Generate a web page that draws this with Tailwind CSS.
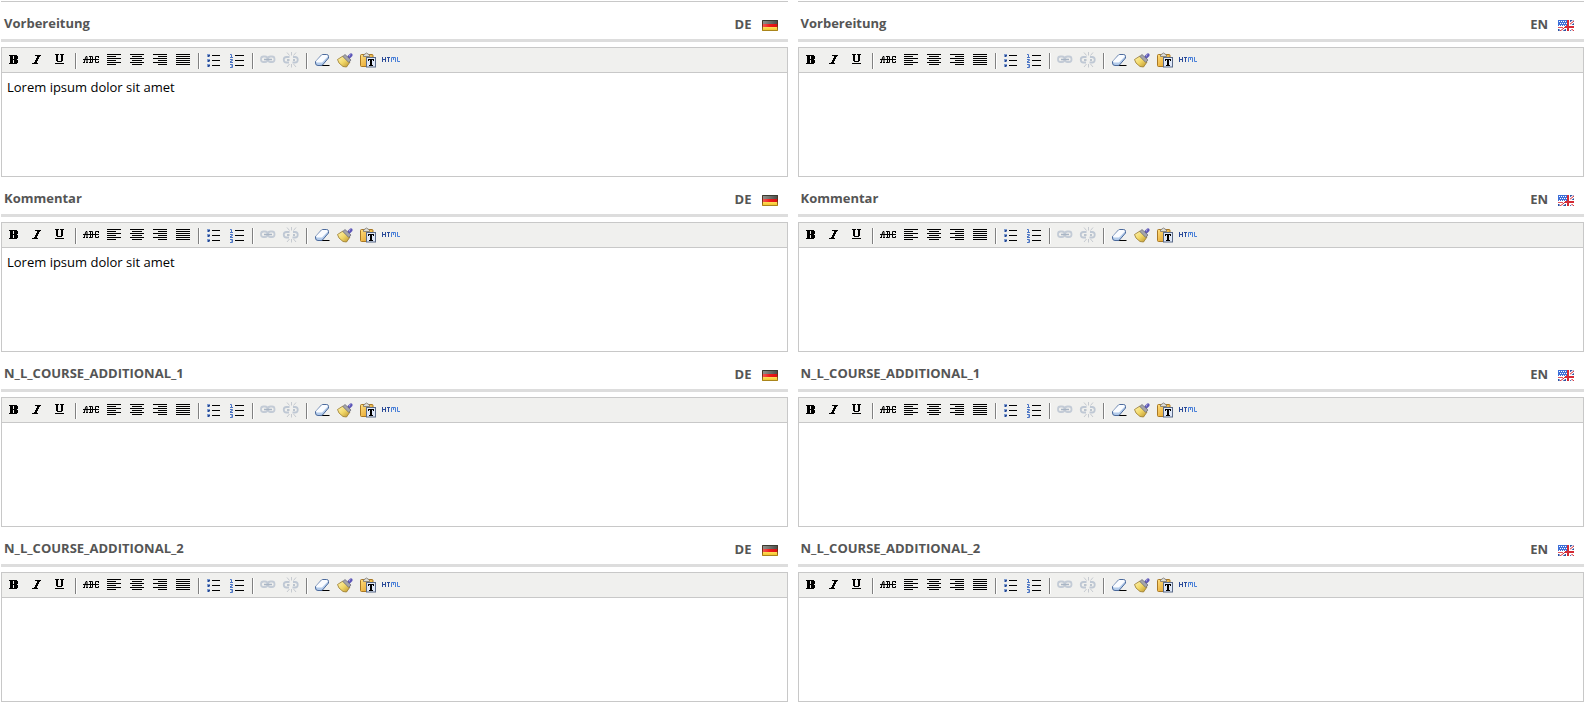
<!DOCTYPE html>
<html lang="de">
<head>
<meta charset="utf-8">
<title>Kurs bearbeiten</title>
<script src="https://cdn.jsdelivr.net/npm/@tailwindcss/browser@4"></script>
</head>
<body class="bg-white font-['Open_Sans',sans-serif] text-[13px]">
<svg class="absolute h-0 w-0" aria-hidden="true">
  <defs>
    <linearGradient id="red" x1="0" y1="0" x2="1" y2="0"><stop offset="0" stop-color="#f0605a"/><stop offset=".5" stop-color="#f01818"/><stop offset="1" stop-color="#d81010"/></linearGradient>
    <linearGradient id="dark" x1="0" y1="0" x2="1" y2="0"><stop offset="0" stop-color="#94948e"/><stop offset="1" stop-color="#4a4a46"/></linearGradient>
    <linearGradient id="gold" x1="0" y1="0" x2="0" y2="1"><stop offset="0" stop-color="#ffdf5a"/><stop offset="1" stop-color="#f0bc20"/></linearGradient>
    <linearGradient id="frame" x1="0" y1="0" x2="0" y2="1"><stop offset="0" stop-color="#3a3a30"/><stop offset=".5" stop-color="#7a2a14"/><stop offset="1" stop-color="#a8841c"/></linearGradient>
    <linearGradient id="bristle" x1="0" y1="0" x2="1" y2="1"><stop offset="0" stop-color="#fff6b8"/><stop offset=".5" stop-color="#f2d868"/><stop offset="1" stop-color="#b8902c"/></linearGradient>
    <linearGradient id="board" x1="0" y1="0" x2="1" y2="1"><stop offset="0" stop-color="#ffdf80"/><stop offset="1" stop-color="#e0981c"/></linearGradient>
  </defs>
  <symbol id="i-bold" viewBox="0 1 20 20"><path fill="#000" d="M5 6h8v1h1v3h-1v1h1v3h-1v1H5v-1h1V7H5zM9 7v3h1V7zM9 11v3h1v-3z"/></symbol>
  <symbol id="i-italic" viewBox="0 1 20 20"><path fill="#000" d="M8 6h6v1h-1v1h-1v2h-1v2h-1v2h1v1H5v-1h2v-1h1v-2h1V9h1V7H8z"/></symbol>
  <symbol id="i-underline" viewBox="0 1 20 20"><path fill="#000" d="M5 5h4v1H8v6h3V6h-1V5h4v1h-1v6h-1v1H7v-1H6V6H5zM5 14h9v1H5z"/></symbol>
  <symbol id="i-strike" viewBox="0 1 20 20"><path fill="none" stroke="#000" d="M2 10.500h16M3.500 14v-2l1.500-4.500h1V14M2 13.500h2M5 13.500h2M9.500 7v7M8 7.500h3.500v6H8M17.500 7v2M17 7.500h-2.500v6h3V12"/></symbol>
  <symbol id="i-left" viewBox="0 1 20 20"><path fill="#000" d="M3 5h14v1H3zM3 7h9v1H3zM3 9h14v1H3zM3 11h9v1H3zM3 13h14v1H3zM3 15h9v1H3z"/></symbol>
  <symbol id="i-center" viewBox="0 1 20 20"><path fill="#000" d="M3 5h14v1H3zM5 7h10v1H5zM3 9h14v1H3zM5 11h10v1H5zM3 13h14v1H3zM5 15h10v1H5z"/></symbol>
  <symbol id="i-right" viewBox="0 1 20 20"><path fill="#000" d="M3 5h14v1H3zM8 7h9v1H8zM3 9h14v1H3zM8 11h9v1H8zM3 13h14v1H3zM8 15h9v1H8z"/></symbol>
  <symbol id="i-full" viewBox="0 1 20 20"><path fill="#000" d="M3 5h14v1H3zM3 7h14v1H3zM3 9h14v1H3zM3 11h14v1H3zM3 13h14v1H3zM3 15h14v1H3z"/></symbol>
  <symbol id="i-ul" viewBox="0 0 20 20"><path fill="#000" d="M8 5h8v1H8zM8 10h8v1H8zM8 15h8v1H8z"/><path fill="#7d9bd0" d="M3 4h3v3H3zM3 9h3v3H3zM3 14h3v3H3z"/><path fill="#27478f" d="M4 5h2v1H5v1H4zM4 10h2v1H5v1H4zM4 15h2v1H5v1H4z"/></symbol>
  <symbol id="i-ol" viewBox="0 0 20 20"><path fill="#000" d="M8 5h9v1H8zM8 10h9v1H8zM8 15h9v1H8z"/><path fill="none" stroke="#4a74c4" d="M3 4.500h1.500V7M3 7.500h3M3 9.500h2.500v1h-1v1H3M3 12.500h3M3 14.500h2.500v3H3M4 16h2"/></symbol>
  <symbol id="i-link" viewBox="0 0 20 20"><g fill="none" stroke="#c3cbd6" stroke-width="1.800"><rect x="3" y="6.500" width="6.500" height="5.500" rx="2.500"/><rect x="10" y="6.500" width="6.500" height="5.500" rx="2.500"/></g><path stroke="#a9b5c4" stroke-width="1.500" d="M6 9.500h8"/></symbol>
  <symbol id="i-unlink" viewBox="0 0 20 20"><g fill="none" stroke="#bfc8d4" stroke-width="1.800"><path d="M8.500 7H5.500a2.700 2.700 0 0 0 0 5.500H8M12 7h2a2.700 2.700 0 0 1 0 5.500h-2.500"/></g><path stroke="#a9b5c4" stroke-width="1.500" d="M6 10h2.500M12 10h2"/><path fill="none" stroke="#c6cad0" d="M10.500 2v3.500M6 2.500l2.500 3M15 2.500l-2.500 3M10.500 14v3.500M6 17l2.500-3M15 17l-2.500-3"/></symbol>
  <symbol id="i-eraser" viewBox="0 0 20 20"><path d="M9 15.500h8.500" stroke="#000"/><path fill="#b3cbea" stroke="#4c6a9c" d="M3.500 11.500L9.500 5Q10.300 4.500 11 4.500h3.500q2 0 2 2v1.500l-6 7q-.500.500-1.500.500H6q-2.500 0-2.500-2.500z"/><path fill="#fafcff" d="M4 11l6-6h4.500q1.500.3 1.300 1.500l-5.800 6H5.500Q4 12.500 4 11z"/></symbol>
  <symbol id="i-brush" viewBox="0 0 20 20"><path stroke="#5b55b8" stroke-width="3.200" stroke-linecap="round" d="M14 7l2-2"/><path fill="#fff" fill-opacity=".5" d="M14 5l2-1-2 3z"/><path fill="url(#bristle)" stroke="#98782a" stroke-width=".8" d="M8 6L2.500 9.500 4 13l4 3.500 3.500.5L15 12z"/><path fill="#a4a4ac" stroke="#66666e" stroke-width=".7" d="M10 4.500L7.800 6.500l6 6 2.200-2.500z"/></symbol>
  <symbol id="i-paste" viewBox="0 0 20 20"><rect x="2.500" y="4.500" width="12.500" height="12" rx="1" fill="url(#board)" stroke="#a87824"/><path fill="#dcdcd8" stroke="#77726a" stroke-width=".8" d="M5.500 6.500V5l1.500-1q1.500-2 3 0l1.500 1v1.500z"/><rect x="8.500" y="7.500" width="9" height="9.500" fill="#dfe8f8" stroke="#5a6a88"/><path fill="#000" d="M10 9h6v2h-1v-1h-1v5h1v1h-4v-1h1v-5h-1v1h-1z"/></symbol>
  <symbol id="i-html" viewBox="0 0 20 20"><g fill="none"><path stroke="#2a4a98" d="M1.500 7v5M4.500 7v5M2 9.500h2M6 7.500h3M7.500 7v5"/><path stroke="#4a80d8" d="M10.500 12V7.500h4V12M12.500 7.500V10M16.500 7v4.500H19"/></g></symbol>
  <symbol id="f-de" viewBox="0 0 16 11"><path fill="url(#dark)" d="M0 0h16v4H0z"/><path fill="url(#red)" d="M0 4h16v3H0z"/><path fill="url(#gold)" d="M0 7h16v4H0z"/><path fill="none" stroke="url(#frame)" d="M.5.5h15v10H.5z"/></symbol>
  <symbol id="f-en" viewBox="0 0 16 11"><path fill="#2d4fa0" d="M0 0h16v11H0z"/><path stroke="#fff" stroke-width="3" d="M2 11l7-5M16 1l-5 4M11 7l5 4"/><path stroke="#d42a35" d="M2 11l7-5M16 1l-5 4M11 7l5 4"/><path fill="#fff" d="M8 0h4v11H8zM6 5h10v4H6z"/><path fill="#d42a35" d="M9 0h2v11H9zM6 6h10v2H6z"/><path fill="#3d6fd8" d="M0 0h9v6H0z"/><path stroke="#fff" stroke-dasharray="1 1" d="M1 1.500h8M2 3.500h7M1 5.500h8"/><path stroke="#fff" d="M0 6.500h7M0 8.500h4"/><path stroke="#e0505a" d="M0 7.500h5"/></symbol>
</svg>

<main class="pl-px pr-[7px] pt-px">
  <div class="grid grid-cols-2 gap-x-[10px]">
    <div class="h-px bg-[#c8c8c8]"></div>
    <div class="h-px bg-[#c8c8c8]"></div>
  </div>
  <div id="fields" class="grid grid-cols-2 gap-x-[10px]"></div>
</main>

<template id="field">
  <section>
    <header class="flex h-10 items-center justify-between border-b-3 border-[#ddd] pt-[7px] pr-[10px] pl-[3px] font-bold text-[#555]">
      <h2></h2>
      <span class="flex items-center gap-[10px] pt-0.5"><span data-lang></span><svg class="h-[11px] w-4"><use/></svg></span>
    </header>
    <div class="mt-[5px] border border-[#c8c8c8]">
      <div role="toolbar" class="flex h-[25px] items-center border-b border-[#c8c8c8] bg-[#f0f0ee] pl-px"></div>
      <div role="textbox" contenteditable="true" aria-multiline="true" class="h-[103px] px-[5px] pt-[5px] leading-[18px] text-black outline-none"></div>
    </div>
  </section>
</template>

<script>
  const tools = [["bold","Fett"],["italic","Kursiv"],["underline","Unterstrichen"],null,["strike","Durchgestrichen"],["left","Linksbündig"],["center","Zentriert"],["right","Rechtsbündig"],["full","Blocksatz"],null,["ul","Aufzählung"],["ol","Nummerierung"],null,["link","Link"],["unlink","Link entfernen"],null,["eraser","Formatierung entfernen"],["brush","Code aufräumen"],["paste","Als Text einfügen"],["html","HTML"]];
  const toolbar = tools.map(t => t
    ? `<button type="button" aria-label="${t[1]}" class="mr-px flex h-[22px] w-[22px] items-center justify-center"><svg class="h-5 w-5"><use href="#i-${t[0]}"/></svg></button>`
    : `<span class="mx-[3px] mt-0.5 h-4 w-0.5 border-l border-[#808080] bg-white"></span>`).join("");
  const fields = [["Vorbereitung","Lorem ipsum dolor sit amet"],["Kommentar","Lorem ipsum dolor sit amet"],["N_L_COURSE_ADDITIONAL_1",""],["N_L_COURSE_ADDITIONAL_2",""]];
  const grid = document.getElementById("fields");
  for (const [title, text] of fields) for (const lang of ["DE","EN"]) {
    const n = document.getElementById("field").content.cloneNode(true);
    n.querySelector("h2").textContent = title;
    n.querySelector("[data-lang]").textContent = lang;
    n.querySelector("use").setAttribute("href", "#f-" + lang.toLowerCase());
    n.querySelector("[role=toolbar]").innerHTML = toolbar;
    const box = n.querySelector("[role=textbox]");
    box.setAttribute("aria-label", title + " " + lang);
    box.textContent = lang === "DE" ? text : "";
    grid.append(n);
  }
</script>
</body>
</html>
